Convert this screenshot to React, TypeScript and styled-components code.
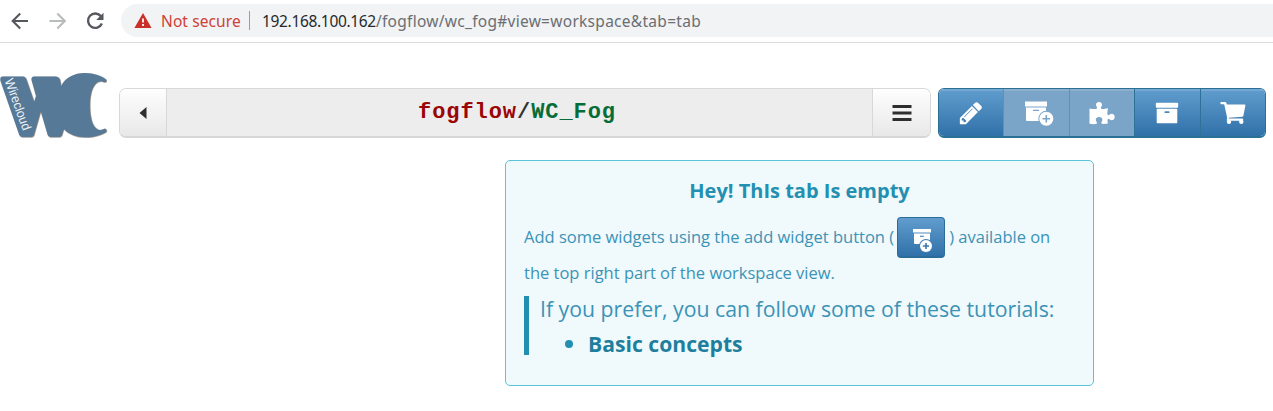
import React from "react";
import styled, { createGlobalStyle } from "styled-components";

const GlobalStyle = createGlobalStyle`
  * { box-sizing: border-box; }
  body { margin: 0; background: #fff; font-family: "Open Sans", sans-serif; overflow: hidden; }
  svg { display: block; flex: none; }
`;

const Page = styled.div`
  display: flex;
  flex-direction: column;
  width: 1273px;
  height: 411px;
  background: #fff;
`;

const BrowserBar = styled.div`
  display: flex;
  align-items: flex-start;
  height: 43px;
  padding-top: 4px;
  border-bottom: 1px solid #dcdddf;
`;

const NavIcons = styled.div`
  width: 121px;
  flex: none;
`;

const AddressBar = styled.div`
  display: flex;
  align-items: center;
  flex: 1;
  height: 33px;
  padding-left: 13px;
  border-radius: 17px 0 0 17px;
  background: #f1f3f4;
  font-family: "Noto Sans", "Open Sans", sans-serif;
  font-size: 15.5px;
  line-height: 33px;
  white-space: nowrap;
`;

const AddressText = styled.span`
  padding-top: 2px;
`;

const NotSecure = styled(AddressText)`
  width: 80px;
  margin-left: 9px;
  color: #cf4038;
  letter-spacing: 0.1px;
`;

const Separator = styled.span`
  width: 1px;
  height: 19px;
  margin: 0 12px 0 8px;
  background: #9a9da1;
`;

const Url = styled(AddressText)`
  color: #6b6e72;
  letter-spacing: 0.28px;
`;

const Host = styled.span`
  color: #27292c;
  letter-spacing: -0.33px;
`;

const Header = styled.header`
  display: flex;
  align-items: flex-start;
  padding: 27px 0 0;
  height: 117px;
`;

const LogoBox = styled.div`
  width: 119px;
  flex: none;
`;

const TitleGroup = styled.div`
  display: flex;
  width: 812px;
  height: 50px;
  margin: 18px 7px 0 0;
  border: 1px solid #d8d8d8;
  border-bottom: 2px solid #d6d6d6;
  border-radius: 7px;
  overflow: hidden;
`;

const LightButton = styled.button<{ $width: number; $side: "left" | "right" }>`
  display: flex;
  align-items: center;
  justify-content: center;
  width: ${(p) => p.$width}px;
  padding: 0;
  border: 0 solid #d8d8d8;
  border-width: ${(p) => (p.$side === "left" ? "0 1px 0 0" : "0 0 0 1px")};
  background: linear-gradient(#fefefe, #e8e8e8);
`;

const Title = styled.div`
  flex: 1;
  padding: 1px 5px 0 0;
  background: #ededed;
  color: #333;
  font: bold 22px/46px "Courier New", "Liberation Mono", monospace;
  letter-spacing: 0.94px;
  text-align: center;
  white-space: nowrap;
`;

const Owner = styled.span`
  color: #9b0505;
`;

const Workspace = styled.span`
  color: #066d38;
`;

const Toolbar = styled.div`
  display: flex;
  width: 328px;
  height: 50px;
  margin-top: 18px;
  border: 1px solid #2b7196;
  border-bottom-width: 2px;
  border-radius: 6px;
  overflow: hidden;
`;

const ToolButton = styled.button<{ $disabled?: boolean }>`
  display: flex;
  align-items: center;
  justify-content: center;
  flex: 1;
  padding: 0;
  border: 0;
  border-left: 1px solid ${(p) => (p.$disabled ? "#5b93b5" : "#2f7299")};
  background: ${(p) => (p.$disabled ? "#7ba5c8" : "linear-gradient(#619dce, #3071a9)")};
  box-shadow: inset 0 2px 0 rgba(255, 255, 255, 0.12);
  &:first-child {
    border-left: 0;
  }
`;

const Alert = styled.section`
  width: 589px;
  height: 226px;
  margin-left: 505px;
  padding: 11px 18px;
  border: 1px solid #58c5d9;
  border-radius: 5px;
  background: #f0f9fc;
  color: #3b93b6;
  white-space: nowrap;
`;

const Heading = styled.h2`
  margin: 0 0 7px;
  color: #2390b1;
  font-size: 20px;
  line-height: 38px;
  text-align: center;
`;

const Line = styled.p`
  display: flex;
  align-items: center;
  margin: 0;
  height: 41px;
  font-size: 16.5px;
  line-height: 24px;
`;

const LineText = styled.span`
  padding-bottom: 2px;
`;

const SecondLine = styled(Line)`
  height: 30px;
`;

const InlineButton = styled.span`
  display: inline-flex;
  align-items: center;
  justify-content: center;
  width: 48px;
  height: 41px;
  margin: 0 4px 0 3px;
  padding: 6px 0 0 3px;
  border: 1px solid #2b6d99;
  border-bottom-width: 2px;
  border-radius: 4px;
  background: linear-gradient(#619dce, #3071a9);
`;

const Quote = styled.blockquote`
  height: 59px;
  margin: 8px 0 0;
  padding-left: 11px;
  border-left: 5px solid #2190b0;
  font-size: 21.25px;
`;

const QuoteText = styled.p`
  margin: 0;
  height: 30px;
  line-height: 25px;
`;

const Tutorials = styled.ul`
  margin: 0;
  padding: 0 0 0 25px;
  list-style: none;
`;

const Tutorial = styled.li`
  display: flex;
  align-items: center;
  height: 35px;
  color: #1e7f9d;
  font-size: 21.15px;
  font-weight: bold;
  line-height: 35px;
  &::before {
    content: "";
    width: 8px;
    height: 8px;
    margin-right: 15px;
    border-radius: 50%;
    background: #2390b1;
  }
`;

const ARCHIVE =
  "M1088 832q0-26-19-45t-45-19h-256q-26 0-45 19t-19 45 19 45 45 19h256q26 0 45-19t19-45zm576-192v960q0 26-19 45t-45 19h-1408q-26 0-45-19t-19-45v-960q0-26 19-45t45-19h1408q26 0 45 19t19 45zm64-448v256q0 26-19 45t-45 19h-1536q-26 0-45-19t-19-45v-256q0-26 19-45t45-19h1536q26 0 45 19t19 45z";
const PENCIL =
  "M491 1536l91-91-235-235-91 91v107h128v128h107zm523-928q0-22-22-22-10 0-17 7l-542 542q-7 7-7 17 0 22 22 22 10 0 17-7l542-542q7-7 7-17zm-54-192l416 416-832 832h-416v-416zm683 96q0 53-37 90l-166 166-416-416 166-165q36-38 90-38 53 0 91 38l235 234q37 39 37 91z";

const Glyph = ({ d, size }: { d: string; size: number }) => (
  <svg width={size} height={size} viewBox="0 0 1792 1792" fill="#fff">
    <path d={d} />
  </svg>
);

const CartIcon = () => (
  <svg width="26" height="24" viewBox="0 0 26 24" fill="#fff">
    <path d="M1.300 1H5q1.200 0 1.600 1.400l.3 1.100h17.600q1 0 .9 1l-2 10.200q-.2.900-1.200 1L8.700 16.700l.2.900h13.300q1 0 1 1.100t-1 1.100H7.800q-1.200 0-1.100-1.100l.5-1.800L4.200 3.200H1.300q-1 0-1-1.100T1.300 1z" />
    <circle cx="9" cy="20.800" r="2.200" />
    <circle cx="21.300" cy="20.800" r="2.200" />
  </svg>
);

const AddWidgetIcon = ({ back }: { back: string }) => (
  <svg width="35" height="26" viewBox="-5 -1 35 26">
    <path d="M1 .5h22v5H1z" fill="#fff" />
    <path d="M2 6.500h20v13.500H3q-1 0-1-1z" fill="#fff" />
    <path d="M9.500 9.400h5" stroke={back} strokeWidth="1.400" strokeLinecap="round" />
    <circle cx="22.300" cy="17.800" r="8" fill={back} />
    <circle cx="22.300" cy="17.800" r="7" fill="#fff" />
    <path d="M22.300 14v7.600M18.500 17.800h7.600" stroke={back} strokeWidth="1.600" />
  </svg>
);

const SmallAddWidgetIcon = () => (
  <svg width="22" height="26" viewBox="0 0 22 26">
    <path d="M1 2h18v3.500H1z" fill="#fff" />
    <path d="M2 6.500h16v10.500H3q-1 0-1-1z" fill="#fff" />
    <path d="M8 9.300h3.800" stroke="#4a87bb" strokeWidth="1.2" />
    <circle cx="14" cy="19" r="7" fill="#3f7eb4" />
    <circle cx="14" cy="19" r="6" fill="#fff" />
    <path d="M14 15.900v6.200M10.900 19h6.200" stroke="#3a78b0" strokeWidth="1.600" />
  </svg>
);

const PuzzleIcon = () => (
  <svg width="26" height="24" viewBox="0 0 26 24" fill="#fff">
    <path d="M.5 7.4C3.2 8 6 8.4 7.5 7.8 9 7 7 5.4 7 3.8 7 2 8.300 1 10 1s3 1 3 2.800c0 1.600-1.900 3.100-.6 4C13.700 8.600 16 7.500 19 7.300c-.5 2.700-1.100 5.600-.2 6.700 1 1 2-1.200 4-1.200 1.800 0 2.900 1.400 2.900 3.200s-1.100 3.200-2.900 3.200c-1.900 0-2.900-1.900-3.800-1.200-.9.800-.4 2.700 0 4.500-2.300.1-4.900 1-6.300.1-1.200-.8.700-2 .7-3.900 0-1.700-1.300-2.700-3.300-2.700s-3.300 1-3.300 2.700c0 1.900 2 2.900 1 3.900-1.200 1-4.800.5-7.300.2z" />
  </svg>
);

const BrowserIcons = () => (
  <svg width="121" height="33" viewBox="0 4 121 33" fill="none" strokeWidth="2.1">
    <path d="M28 21H13M20.200 13.500L12.700 21l7.500 7.500" stroke="#55585c" />
    <path d="M49.500 21h15M57.300 13.500l7.500 7.500-7.500 7.500" stroke="#b9bbbd" />
    <path d="M101 16.300A7.200 7.200 0 1 0 101.900 23.500" stroke="#55585c" strokeWidth="2.400" />
    <path d="M103.500 12.700v7.300h-7.300z" fill="#55585c" />
  </svg>
);

const WarningIcon = () => (
  <svg width="18" height="17" viewBox="0 0 18 17">
    <path d="M9 1l8.600 15H.4z" fill="#c9302a" />
    <path d="M9 6.500v4M9 12v2" stroke="#f8e9e8" strokeWidth="2" />
  </svg>
);

const Logo = () => (
  <svg width="112" height="70" viewBox="0 70 112 70">
    <defs>
      <filter id="edge" x="-5%" y="-5%" width="115%" height="115%">
        <feDropShadow dx="0.7" dy="0.6" stdDeviation="0.5" floodColor="#333" floodOpacity="0.8" />
      </filter>
    </defs>
    <path
      filter="url(#edge)"
      fill="#557997"
      d="M2.500 76.500H23Q25 76.500 25.800 78.500L34 102L36 96L31.500 80Q31 76.500 34 76.500H56Q58.500 76.500 59.500 79L61 86.500C65 77.500 74 73 85 73C94 73 102 76 106 79.500Q106.500 82 104 82Q101 80.500 98 81.500C92 84 89.500 94 89.500 105C89.500 117 92 126 97 129Q100 131 105 128.500Q107 129.500 106 131.500C101 135 93 137 85 137C76 137 68 134 63.500 128.500L61.500 135Q60.800 136.700 59 136.700H50Q48.400 136.700 47.700 135L40.500 110.500L33.500 135Q33 136.700 31 136.700H22Q20 136.700 19.300 135L0.500 81Q-0.500 76.500 2.500 76.500Z"
    />
    <text
      transform="translate(4.500 80.500) rotate(70)"
      fill="#eef4f8"
      fontFamily="Liberation Sans, sans-serif"
      fontSize="13"
      textLength="54"
      lengthAdjust="spacingAndGlyphs"
    >
      Wirecloud
    </text>
  </svg>
);

export default function App() {
  return (
    <>
      <GlobalStyle />
      <Page>
        <BrowserBar>
          <NavIcons>
            <BrowserIcons />
          </NavIcons>
          <AddressBar>
            <WarningIcon />
            <NotSecure>Not secure</NotSecure>
            <Separator />
            <Url>
              <Host>192.168.100.162</Host>/fogflow/wc_fog#view=workspace&amp;tab=tab
            </Url>
          </AddressBar>
        </BrowserBar>
        <Header>
          <LogoBox>
            <Logo />
          </LogoBox>
          <TitleGroup>
            <LightButton $width={47} $side="left">
              <svg width="8" height="14" viewBox="0 0 8 14">
                <path d="M7.500 1v12L.5 7z" fill="#2e2e2e" />
              </svg>
            </LightButton>
            <Title>
              <Owner>fogflow</Owner>/<Workspace>WC_Fog</Workspace>
            </Title>
            <LightButton $width={58} $side="right">
              <svg width="20" height="18" viewBox="0 0 20 18">
                <path d="M.5 2.500h19M.5 9h19M.5 15.500h19" stroke="#2e2e2e" strokeWidth="3" />
              </svg>
            </LightButton>
          </TitleGroup>
          <Toolbar>
            <ToolButton>
              <Glyph d={PENCIL} size={26} />
            </ToolButton>
            <ToolButton $disabled>
              <AddWidgetIcon back="#7ba5c8" />
            </ToolButton>
            <ToolButton $disabled>
              <PuzzleIcon />
            </ToolButton>
            <ToolButton>
              <Glyph d={ARCHIVE} size={24} />
            </ToolButton>
            <ToolButton>
              <CartIcon />
            </ToolButton>
          </Toolbar>
        </Header>
        <Alert>
          <Heading>Hey! ThIs tab Is empty</Heading>
          <Line>
            <LineText>Add some widgets using the add widget button (</LineText>
            <InlineButton>
              <SmallAddWidgetIcon />
            </InlineButton>
            <LineText>) available on</LineText>
          </Line>
          <SecondLine>the top right part of the workspace view.</SecondLine>
          <Quote>
            <QuoteText>If you prefer, you can follow some of these tutorials:</QuoteText>
            <Tutorials>
              <Tutorial>Basic concepts</Tutorial>
            </Tutorials>
          </Quote>
        </Alert>
      </Page>
    </>
  );
}
